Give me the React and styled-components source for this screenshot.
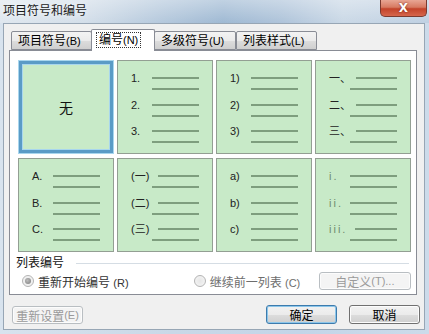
import React from 'react';
import styled, { createGlobalStyle } from 'styled-components';

const GlobalStyle = createGlobalStyle`
  html, body {
    margin: 0;
    padding: 0;
    background: #c5d6e8;
  }
  * {
    box-sizing: border-box;
  }
`;

const FONT = `"Liberation Sans", "Noto Sans CJK SC", sans-serif`;

const cells = [
  { none: true },
  { labels: ['1.', '2.', '3.'] },
  { labels: ['1)', '2)', '3)'] },
  { labels: ['一、', '二、', '三、'], widths: [27, 27, 27] },
  { labels: ['A.', 'B.', 'C.'] },
  { labels: ['(一)', '(二)', '(三)'], widths: [27, 27, 27] },
  { labels: ['a)', 'b)', 'c)'] },
  { labels: ['i.', 'ii.', 'iii.'], widths: [21, 21, 26], roman: true },
];

const Window = styled.div`
  width: 429px;
  height: 334px;
  display: flex;
  flex-direction: column;
  font-family: ${FONT};
  background: linear-gradient(90deg, #d8e3ee 0%, #c9d8e7 40%, #c3d5e8 70%, #ccdbea 100%);
`;

const TitleBar = styled.div`
  height: 23px;
  flex: none;
  display: flex;
  align-items: flex-start;
  justify-content: space-between;
  padding: 0 2px 0 3px;
  background:
    linear-gradient(180deg, rgba(255, 255, 255, 0.35) 0%, rgba(255, 255, 255, 0) 100%),
    linear-gradient(90deg, #dfe7ef 0%, #d3dee9 20%, #b4c8dc 38%, #9fb9d3 52%, #afc4da 66%, #cad8e6 80%, #bfd0e2 100%);
`;

const Title = styled.span`
  font-size: 12px;
  line-height: 14px;
  margin-top: 4px;
  color: #1a1a1a;
  text-shadow: 0 0 6px rgba(255, 255, 255, 0.9);
`;

const CloseButton = styled.div`
  width: 47px;
  height: 17px;
  display: flex;
  align-items: center;
  justify-content: center;
  border: 1px solid #7b3a2f;
  border-top: none;
  border-radius: 0 0 5px 5px;
  background: linear-gradient(180deg, #e8a694 0%, #d77a62 45%, #c3432a 55%, #d6664c 100%);
  color: #fff;
  font-family: "DejaVu Sans", sans-serif;
  font-weight: bold;
  font-size: 12px;
  text-shadow: 0 0 2px #6a1a10;
`;

const Client = styled.div`
  flex: 1;
  margin: 0 4px 4px 3px;
  border: 1px solid #97a6b5;
  background: #f0f0f0;
  padding: 5px 7px 0 5px;
  display: flex;
  flex-direction: column;
`;

const TabStrip = styled.div`
  height: 21px;
  display: flex;
  align-items: flex-end;
  padding-left: 2px;
  position: relative;
  z-index: 1;
`;

const Tab = styled.div`
  width: ${p => p.$w}px;
  height: ${p => (p.$active ? 22 : 19)}px;
  margin-bottom: ${p => (p.$active ? -1 : 0)}px;
  margin-left: ${p => (p.$active ? -1 : 0)}px;
  margin-right: ${p => (p.$active ? -1 : 0)}px;
  border: 1px solid #898c95;
  border-bottom: ${p => (p.$active ? 'none' : '1px solid #898c95')};
  border-radius: 2px 2px 0 0;
  background: ${p => (p.$active
    ? '#ffffff'
    : 'linear-gradient(180deg, #f3f3f3 0%, #ebebeb 50%, #dddddd 51%, #cfcfcf 100%)')};
  font-size: 12px;
  line-height: 14px;
  color: #000;
  display: flex;
  align-items: flex-start;
  padding: ${p => (p.$active ? '2px 0 0 4px' : '2px 0 0 6px')};
  position: relative;
  z-index: ${p => (p.$active ? 2 : 1)};
`;

const FocusBox = styled.span`
  border: 1px dotted #333;
  padding: 0 2px;
  height: 16px;
`;

const Mn = styled.span`
  font-size: 11px;
`;

const Panel = styled.div`
  width: 408px;
  height: 245px;
  border: 1px solid #898c95;
  background: #fff;
  padding: 9px 5px 0 8px;
  display: flex;
  flex-direction: column;
`;

const Grid = styled.div`
  display: grid;
  grid-template-columns: repeat(4, 96px);
  grid-template-rows: repeat(2, 94px);
  column-gap: 3px;
  row-gap: 4px;
`;

const Cell = styled.div`
  background: #c8eac8;
  border: 1px solid #939f93;
  padding: 11px 13px 0 13px;
  display: flex;
  flex-direction: column;
  gap: 8.5px;
`;

const SelectedCell = styled.div`
  background: #c8eac8;
  border: 3px solid #5a9bc6;
  box-shadow: 0 0 0 1px #a8d6ee, inset 0 0 0 1px #a8d6ee;
  margin: 1px;
  display: flex;
  align-items: center;
  justify-content: center;
  font-family: "Noto Sans CJK SC", sans-serif;
  font-size: 14px;
  color: #111;
`;

const Item = styled.div`
  display: flex;
  flex-direction: column;
`;

const FirstRow = styled.div`
  height: 12px;
  display: flex;
  align-items: center;
`;

const Label = styled.span`
  flex: none;
  width: ${p => p.$w}px;
  font-size: 11px;
  line-height: 12px;
  white-space: nowrap;
  color: ${p => (p.$roman ? '#6f8a6f' : '#222')};
  letter-spacing: ${p => (p.$roman ? '2px' : '0')};
`;

const Line = styled.div`
  flex: 1;
  height: 2px;
  background: #7e9e7e;
`;

const SecondLine = styled.div`
  height: 2px;
  margin: 4px 0 0 21px;
  background: #7e9e7e;
`;

const GroupHead = styled.div`
  margin: 4px 0 0 -2px;
  height: 14px;
  display: flex;
  align-items: center;
  gap: 12px;
  font-size: 12px;
  line-height: 14px;
  color: #111;
`;

const HeadRule = styled.div`
  flex: 1;
  height: 1px;
  margin-right: 2px;
  background: #d5dde4;
`;

const RadioRow = styled.div`
  margin-top: 2px;
  height: 18px;
  display: flex;
  align-items: center;
  font-size: 12px;
`;

const RadioOption = styled.div`
  display: flex;
  align-items: center;
  gap: 4px;
  width: ${p => p.$w}px;
  padding-left: ${p => p.$pl}px;
  color: ${p => (p.$muted ? '#6d6d6d' : '#333')};
`;

const RadioDot = styled.span`
  width: 12px;
  height: 12px;
  border-radius: 50%;
  border: 1px solid #b4b4b4;
  background: radial-gradient(circle, #e6e6e6 0%, #f7f7f7 100%);
  display: flex;
  align-items: center;
  justify-content: center;

  &::after {
    content: '';
    width: 6px;
    height: 6px;
    border-radius: 50%;
    background: ${p => (p.$on ? 'radial-gradient(circle at 40% 40%, #bdbdbd, #7c7c7c)' : 'transparent')};
  }
`;

const Button = styled.div`
  width: ${p => p.$w}px;
  height: ${p => p.$h || 19}px;
  border-radius: 3px;
  display: flex;
  align-items: center;
  justify-content: center;
  font-size: 12px;
  border: 1px solid ${p => (p.$disabled ? '#b9bec2' : p.$default ? '#3d7bad' : '#707070')};
  color: ${p => (p.$disabled ? '#9a9a9a' : '#000')};
  background: ${p => (p.$disabled
    ? '#f4f4f4'
    : 'linear-gradient(180deg, #f2f2f2 0%, #ebebeb 50%, #dddddd 51%, #cfcfcf 100%)')};
  box-shadow: ${p => (p.$default ? 'inset 0 0 0 1px #8cc6ea' : 'inset 0 0 0 1px #fcfcfc')};
`;

const Footer = styled.div`
  display: flex;
  align-items: flex-start;
  margin: 10px -3px 0 3px;
`;

const FooterLeft = styled.div`
  flex: 1;
  padding-top: 1px;
`;

const FooterRight = styled.div`
  display: flex;
  gap: 12px;
`;

const NumberCell = ({ cell }) => (
  <Cell>
    {cell.labels.map((label, i) => (
      <Item key={label}>
        <FirstRow>
          <Label $w={cell.widths ? cell.widths[i] : 21} $roman={cell.roman}>{label}</Label>
          <Line />
        </FirstRow>
        <SecondLine />
      </Item>
    ))}
  </Cell>
);

export default function App() {
  return (
    <Window>
      <GlobalStyle />
      <TitleBar>
        <Title>项目符号和编号</Title>
        <CloseButton>X</CloseButton>
      </TitleBar>
      <Client>
        <TabStrip>
          <Tab $w={81}>项目符号<Mn>(B)</Mn></Tab>
          <Tab $w={64} $active><FocusBox>编号<Mn>(N)</Mn></FocusBox></Tab>
          <Tab $w={82}>多级符号<Mn>(U)</Mn></Tab>
          <Tab $w={81}>列表样式<Mn>(L)</Mn></Tab>
        </TabStrip>
        <Panel>
          <Grid>
            {cells.map((cell, i) => (cell.none
              ? <SelectedCell key={i}>无</SelectedCell>
              : <NumberCell key={i} cell={cell} />))}
          </Grid>
          <GroupHead>
            列表编号
            <HeadRule />
          </GroupHead>
          <RadioRow>
            <RadioOption $w={175} $pl={4}>
              <RadioDot $on />
              <span>重新开始编号 <Mn>(R)</Mn></span>
            </RadioOption>
            <RadioOption $w={128} $pl={2} $muted>
              <RadioDot />
              <span>继续前一列表 <Mn>(C)</Mn></span>
            </RadioOption>
            <Button $w={93} $h={18} $disabled>自定义<Mn>(T)...</Mn></Button>
          </RadioRow>
        </Panel>
        <Footer>
          <FooterLeft>
            <Button $w={71} $h={18} $disabled>重新设置<Mn>(E)</Mn></Button>
          </FooterLeft>
          <FooterRight>
            <Button $w={71} $default>确定</Button>
            <Button $w={71}>取消</Button>
          </FooterRight>
        </Footer>
      </Client>
    </Window>
  );
}
